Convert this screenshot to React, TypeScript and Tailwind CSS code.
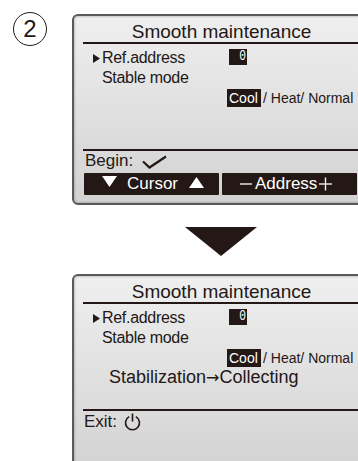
import React from "react";

const INK = "#231815";

function DownTri({ w, h }: { w: number; h: number }) {
  return (
    <svg width={w} height={h} viewBox={`0 0 ${w} ${h}`} className="block shrink-0">
      <polygon points={`0,0 ${w},0 ${w / 2},${h}`} fill="currentColor" />
    </svg>
  );
}
function UpTri({ w, h }: { w: number; h: number }) {
  return (
    <svg width={w} height={h} viewBox={`0 0 ${w} ${h}`} className="block shrink-0">
      <polygon points={`0,${h} ${w},${h} ${w / 2},0`} fill="currentColor" />
    </svg>
  );
}

function Panel({ second }: { second?: boolean }) {
  return (
    <div
      className={`w-[299px] shrink-0 rounded-[6px] border-2 border-[#5a5a5a] bg-linear-to-b from-[#efefef] to-[#d2d2d2] shadow-[inset_0_0_2px_1px_rgba(0,0,0,0.18)] flex flex-col ${
        second ? "h-[200px]" : "h-[191px]"
      }`}
    >
      <div className="h-[26px] pt-[5px] text-[19px] leading-[22px] text-center">Smooth maintenance</div>
      <div className="h-[2px] ml-[9px] mr-[9px] bg-[#231815]" />
      <div className="mt-[4px] flex flex-col text-[16px] leading-[20px] tracking-[-0.3px]">
        <div className="h-[20px] flex items-start">
          <div className="w-[19px] shrink-0" />
          <div className="w-[9px] shrink-0 pt-[6px]">
            <svg width="7" height="9" viewBox="0 0 7 9" className="block">
              <polygon points="0,0 7,4.5 0,9" fill={INK} />
            </svg>
          </div>
          <div className="w-[127px] shrink-0">Ref.address</div>
          <div className="mt-[1px] w-[18px] h-[16px] bg-[#231815] text-white flex items-center justify-end pr-[1px] overflow-hidden">
            <span className="inline-block scale-x-75 origin-right font-['Liberation_Mono',monospace] text-[15px] leading-[16px] tracking-normal">0</span>
          </div>
        </div>
        <div className="h-[20px] pl-[28px]">Stable mode</div>
        <div className="h-[20px] flex items-start pl-[153px] text-[14px] tracking-normal">
          <div className="mt-[1px] w-[34px] h-[18px] bg-[#231815] text-white leading-[18px] pl-[2px]">Cool</div>
          <div className="mt-[1px] leading-[18px] ml-[2px] whitespace-pre">/ Heat/ Normal</div>
        </div>
      </div>
      {second ? (
        <div className="-mt-[1px] h-[20px] pl-[35px] text-[18px] leading-[20px] whitespace-nowrap">
          Stabilization<span className="font-['DejaVu_Sans',sans-serif] text-[16px]">→</span>Collecting
        </div>
      ) : null}
      <div className={`h-[2px] ml-[9px] mr-[9px] bg-[#231815] ${second ? "mt-[22px]" : "mt-[41px]"}`} />
      {second ? (
        <div className="mt-[1px] h-[20px] flex items-center pl-[10px] text-[17px] leading-[20px]">
          <span>Exit:</span>
          <svg width="17" height="18" viewBox="0 0 17 18" className="ml-[7px] block" fill="none" stroke={INK} strokeWidth="1.6">
            <path d="M5.2 3.6 A7 7 0 1 0 11.8 3.6" strokeLinecap="butt" />
            <line x1="8.5" y1="0.5" x2="8.5" y2="8.5" />
          </svg>
        </div>
      ) : (
        <>
          <div className="h-[20px] flex items-center pl-[11px] text-[17px] leading-[20px]">
            <span>Begin:</span>
            <svg width="25" height="14" viewBox="0 0 25 14" className="ml-[9px] mt-[2px] block" fill="none" stroke={INK} strokeWidth="2.2" strokeLinejoin="miter">
              <polyline points="1,6.5 7.5,12.5 24,1.5" />
            </svg>
          </div>
          <div className="mt-[2px] flex gap-[3px] pl-[10px] text-[17px] leading-[22px] text-white">
            <div className="w-[135px] h-[22px] rounded-[1px] bg-[#231815] flex items-start pl-[18px]">
              <div className="mt-[3px]">
                <DownTri w={15} h={11} />
              </div>
              <span className="ml-[10px]">Cursor</span>
              <div className="mt-[4px] ml-[11px]">
                <UpTri w={15} h={11} />
              </div>
            </div>
            <div className="w-[135px] h-[22px] rounded-[1px] bg-[#231815] flex items-start pl-[18px]">
              <svg width="12" height="22" viewBox="0 0 12 22" className="block" stroke="white" strokeWidth="1.3">
                <line x1="0" y1="11" x2="12" y2="11" />
              </svg>
              <span className="ml-[3px]">Address</span>
              <svg width="15" height="22" viewBox="0 0 15 22" className="ml-[1px] block" stroke="white" strokeWidth="1.3">
                <line x1="1" y1="11" x2="14" y2="11" />
                <line x1="7.5" y1="4.5" x2="7.5" y2="17.5" />
              </svg>
            </div>
          </div>
        </>
      )}
    </div>
  );
}

export default function App() {
  return (
    <div className="w-[358px] h-[461px] overflow-hidden bg-white flex text-[#231815] font-['Liberation_Sans',Arial,sans-serif]">
      <div className="w-[72px] shrink-0">
        <div className="mt-[12px] ml-[13px] w-[34px] h-[34px] rounded-full border-[1.5px] border-[#231815] flex items-center justify-center text-[24px] leading-none">
          2
        </div>
      </div>
      <div className="flex flex-col shrink-0">
        <div className="mt-[14px]">
          <Panel />
        </div>
        <div className="mt-[22px] ml-[113px] text-[#231815]">
          <DownTri w={72} h={29} />
        </div>
        <div className="mt-[18px]">
          <Panel second />
        </div>
      </div>
    </div>
  );
}
